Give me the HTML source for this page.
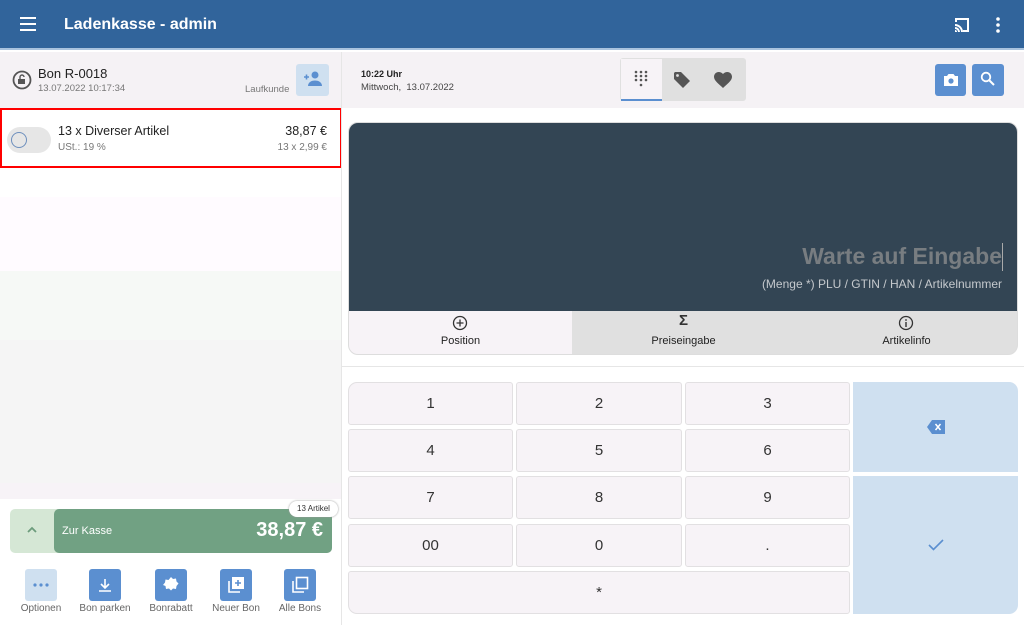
<!DOCTYPE html>
<html><head><meta charset="utf-8"><style>
*{box-sizing:border-box;margin:0;padding:0}
body{width:1024px;height:625px;overflow:hidden;font-family:"Liberation Sans",sans-serif;background:#fff;position:relative;color:#222}
.a{position:absolute}
.hdr{left:0;top:0;width:1024px;height:50px;background:#31649b;border-bottom:2px solid #a9c3de}
.key{position:absolute;background:#f7f3f7;border:1px solid #e2e0e2;border-radius:3px;display:flex;align-items:center;justify-content:center;font-size:15px;color:#333}
.bb{position:absolute;top:569px;width:32px;height:32px;background:#5b8fd0;border-radius:3px;display:flex;align-items:center;justify-content:center}
.bl{position:absolute;top:603px;font-size:10px;color:#666;text-align:center;width:70px}
</style></head><body>
<div class="a hdr">
 <svg class="a" style="left:20px;top:17px" width="18" height="14"><rect y="0" width="16" height="2" fill="#fff"/><rect y="6" width="16" height="2" fill="#fff"/><rect y="12" width="16" height="2" fill="#fff"/></svg>
 <div class="a" style="left:64px;top:16px;color:#fff;font-size:16px;font-weight:bold">Ladenkasse - admin</div>
 <svg class="a" style="left:953px;top:17px" width="18" height="16" viewBox="0 0 18 16"><path d="M2 1h14v14h-6v-2h4V3H4v2H2z" fill="#fff"/><path d="M2 7a8 8 0 0 1 8 8h-2a6 6 0 0 0-6-6zM2 10a5 5 0 0 1 5 5H5a3 3 0 0 0-3-3zM2 13a2 2 0 0 1 2 2H2z" fill="#fff"/></svg>
 <svg class="a" style="left:996px;top:17px" width="4" height="16"><circle cx="2" cy="2" r="1.8" fill="#fff"/><circle cx="2" cy="8" r="1.8" fill="#fff"/><circle cx="2" cy="14" r="1.8" fill="#fff"/></svg>
</div>
<!-- left panel -->
<div class="a" style="left:0;top:52px;width:342px;height:56px;background:#f5f2f5"></div>
<svg class="a" style="left:12px;top:70px" width="20" height="20" viewBox="0 0 20 20"><circle cx="10" cy="10" r="8.5" fill="none" stroke="#555" stroke-width="1.8"/><rect x="6" y="9" width="7" height="5" fill="#555"/><path d="M8 9V7a2 2 0 0 1 4 0" fill="none" stroke="#555" stroke-width="1.4"/></svg>
<div class="a" style="left:38px;top:66px;font-size:13px;color:#222">Bon R-0018</div>
<div class="a" style="left:38px;top:83px;font-size:9.5px;color:#777">13.07.2022 10:17:34</div>
<div class="a" style="left:245px;top:84px;font-size:9.5px;color:#777">Laufkunde</div>
<div class="a" style="left:296px;top:64px;width:33px;height:32px;background:#cfe0f0;border-radius:3px"></div>
<svg class="a" style="left:303px;top:71px" width="20" height="16" viewBox="0 0 20 16"><circle cx="12" cy="4" r="3.5" fill="#5b8fd0"/><path d="M5 15c0-4 4-5.5 7-5.5s7 1.5 7 5.5z" fill="#5b8fd0"/><path d="M1 6h5M3.5 3.5v5" stroke="#5b8fd0" stroke-width="1.6"/></svg>
<div class="a" style="left:0;top:108px;width:342px;height:60px;background:#fff;border:2px solid #f00"></div>
<div class="a" style="left:7px;top:127px;width:44px;height:26px;background:#e6e6e6;border-radius:13px"></div>
<div class="a" style="left:11px;top:132px;width:16px;height:16px;border:1.5px solid #6d8fbd;border-radius:50%"></div>
<div class="a" style="left:58px;top:124px;font-size:12.5px;color:#222">13 x Diverser Artikel</div>
<div class="a" style="left:58px;top:142px;font-size:10px;color:#777">USt.: 19 %</div>
<div class="a" style="left:250px;top:124px;width:77px;text-align:right;font-size:12.5px;color:#222">38,87 €</div>
<div class="a" style="left:230px;top:142px;width:97px;text-align:right;font-size:10px;color:#777">13 x 2,99 €</div>
<div class="a" style="left:0;top:197px;width:342px;height:74px;background:#fffbff"></div>
<div class="a" style="left:0;top:271px;width:342px;height:69px;background:#f6f9f6"></div>
<div class="a" style="left:0;top:340px;width:342px;height:143px;background:#f5f5f5"></div>
<div class="a" style="left:0;top:483px;width:342px;height:16px;background:#f7f3f7"></div>
<div class="a" style="left:10px;top:509px;width:322px;height:44px;background:#d5e7d5;border-radius:5px"></div>
<div class="a" style="left:54px;top:509px;width:278px;height:44px;background:#71a183;border-radius:5px"></div>
<svg class="a" style="left:26px;top:526px" width="12" height="8"><path d="M2 6l4-4 4 4" fill="none" stroke="#6c9c7c" stroke-width="1.8"/></svg>
<div class="a" style="left:62px;top:525px;font-size:11px;color:#fff">Zur Kasse</div>
<div class="a" style="left:200px;top:519px;width:123px;text-align:right;font-size:20px;font-weight:bold;color:#fff">38,87 €</div>
<div class="a" style="left:289px;top:501px;width:49px;height:16px;background:#fff;border-radius:8px;box-shadow:0 0 2px #999;font-size:8px;line-height:16px;text-align:center;color:#333">13 Artikel</div>
<div class="bb" style="left:25px;background:#cfe0f0"><svg width="16" height="4"><circle cx="2" cy="2" r="1.6" fill="#5b8fd0"/><circle cx="8" cy="2" r="1.6" fill="#5b8fd0"/><circle cx="14" cy="2" r="1.6" fill="#5b8fd0"/></svg></div>
<div class="bb" style="left:89px"><svg width="14" height="16"><path d="M7 2v9M3 7l4 4 4-4M1 14h12" fill="none" stroke="#fff" stroke-width="1.6"/></svg></div>
<div class="bb" style="left:155px"><svg width="18" height="18" viewBox="0 0 18 18"><path d="M9 1l2 2 3-.5.5 3 2 2-2 2.5-.5 3-3-.5-2 2-2-2-3 .5-.5-3L1 9l2-2.5.5-3 3 .5z" fill="#fff"/></svg></div>
<div class="bb" style="left:220px"><svg width="18" height="18"><path d="M2 5v11h11" fill="none" stroke="#fff" stroke-width="1.6"/><rect x="5" y="1" width="12" height="12" fill="#fff"/><path d="M11 4v6M8 7h6" stroke="#5b8fd0" stroke-width="1.6"/></svg></div>
<div class="bb" style="left:284px"><svg width="18" height="18"><path d="M2 5v11h11" fill="none" stroke="#fff" stroke-width="1.6"/><rect x="5.5" y="1.5" width="11" height="11" fill="none" stroke="#fff" stroke-width="1.6"/></svg></div>
<div class="bl" style="left:6px">Optionen</div>
<div class="bl" style="left:70px">Bon parken</div>
<div class="bl" style="left:136px">Bonrabatt</div>
<div class="bl" style="left:201px">Neuer Bon</div>
<div class="bl" style="left:265px">Alle Bons</div>
<div class="a" style="left:341px;top:52px;width:1px;height:573px;background:#e6e6e6"></div>
<!-- right top -->
<div class="a" style="left:342px;top:52px;width:682px;height:56px;background:#f5f2f5"></div>
<div class="a" style="left:361px;top:69px;font-size:9px;font-weight:bold;color:#222">10:22 Uhr</div>
<div class="a" style="left:361px;top:82px;font-size:9.5px;color:#444">Mittwoch,&nbsp; 13.07.2022</div>
<div class="a" style="left:620px;top:58px;width:126px;height:43px;background:#e0e0e0;border-radius:3px"></div>
<div class="a" style="left:621px;top:59px;width:41px;height:42px;background:#f7f3f7;border-bottom:2px solid #5b8fd0"></div>
<svg class="a" style="left:634px;top:70px" width="14" height="19"><g fill="#555"><circle cx="2" cy="2" r="1.3"/><circle cx="7" cy="2" r="1.3"/><circle cx="12" cy="2" r="1.3"/><circle cx="2" cy="6" r="1.3"/><circle cx="7" cy="6" r="1.3"/><circle cx="12" cy="6" r="1.3"/><circle cx="2" cy="10" r="1.3"/><circle cx="7" cy="10" r="1.3"/><circle cx="12" cy="10" r="1.3"/><circle cx="7" cy="15" r="1.3"/></g></svg>
<svg class="a" style="left:673px;top:71px" width="18" height="18" viewBox="0 0 18 18"><path d="M1 2v6l9 9 7-7-9-9H2z" fill="#555"/><circle cx="4.5" cy="4.5" r="1.4" fill="#e0e0e0"/></svg>
<svg class="a" style="left:714px;top:72px" width="18" height="16" viewBox="0 0 18 16"><path d="M9 16l-1.3-1.2C3 10.6 0 8 0 4.8 0 2.2 2 0 4.7 0 6.2 0 7.9.8 9 2c1.1-1.2 2.8-2 4.3-2C16 0 18 2.2 18 4.8c0 3.2-3 5.8-7.7 10z" fill="#555"/></svg>
<div class="a" style="left:935px;top:64px;width:31px;height:32px;background:#5b8fd0;border-radius:3px"></div>
<svg class="a" style="left:943px;top:72px" width="16" height="16"><path d="M1 4h3l1.5-2h5L12 4h3v10H1z" fill="#fff"/><circle cx="8" cy="9" r="2.6" fill="#5b8fd0"/></svg>
<div class="a" style="left:972px;top:64px;width:32px;height:32px;background:#5b8fd0;border-radius:3px"></div>
<svg class="a" style="left:980px;top:71px" width="16" height="16"><circle cx="6" cy="6" r="4.3" fill="none" stroke="#fff" stroke-width="1.8"/><path d="M9 9l5 5" stroke="#fff" stroke-width="2"/></svg>
<!-- display -->
<div class="a" style="left:348px;top:122px;width:670px;height:233px;border-radius:10px;background:#e0e0e0;overflow:hidden;border:1px solid #ddd">
 <div class="a" style="left:0;top:0;width:670px;height:188px;background:#334554"></div>
 <div class="a" style="left:0;top:188px;width:223px;height:45px;background:#f7f3f7"></div>
 <div class="a" style="left:200px;top:120px;width:453px;text-align:right;font-size:23px;font-weight:bold;color:#787d81">Warte auf Eingabe</div>
 <div class="a" style="left:653px;top:120px;width:1px;height:28px;background:#aaa"></div>
 <div class="a" style="left:200px;top:154px;width:453px;text-align:right;font-size:12px;color:#c5c9cd">(Menge *) PLU / GTIN / HAN / Artikelnummer</div>
 <svg class="a" style="left:103px;top:192px" width="16" height="16"><circle cx="8" cy="8" r="6.5" fill="none" stroke="#333" stroke-width="1.3"/><path d="M8 4.5v7M4.5 8h7" stroke="#333" stroke-width="1.3"/></svg>
 <div class="a" style="left:0;top:212px;width:223px;text-align:center;font-size:11px;color:#222">Position</div>
 <div class="a" style="left:223px;top:189px;width:223px;text-align:center;font-size:15px;font-weight:bold;color:#333">Σ</div>
 <div class="a" style="left:223px;top:212px;width:223px;text-align:center;font-size:11px;color:#222">Preiseingabe</div>
 <svg class="a" style="left:549px;top:192px" width="16" height="16"><circle cx="8" cy="8" r="6.5" fill="none" stroke="#333" stroke-width="1.3"/><path d="M8 7v5" stroke="#333" stroke-width="1.4"/><circle cx="8" cy="5" r=".9" fill="#333"/></svg>
 <div class="a" style="left:446px;top:212px;width:223px;text-align:center;font-size:11px;color:#222">Artikelinfo</div>
</div>
<div class="a" style="left:342px;top:366px;width:682px;height:1px;background:#e6e6e6"></div>
<!-- keypad -->
<div class="key" style="left:348px;top:382px;width:165px;height:43px;border-top-left-radius:9px">1</div>
<div class="key" style="left:516px;top:382px;width:166px;height:43px">2</div>
<div class="key" style="left:685px;top:382px;width:165px;height:43px">3</div>
<div class="key" style="left:348px;top:429px;width:165px;height:43px">4</div>
<div class="key" style="left:516px;top:429px;width:166px;height:43px">5</div>
<div class="key" style="left:685px;top:429px;width:165px;height:43px">6</div>
<div class="key" style="left:348px;top:476px;width:165px;height:43px">7</div>
<div class="key" style="left:516px;top:476px;width:166px;height:43px">8</div>
<div class="key" style="left:685px;top:476px;width:165px;height:43px">9</div>
<div class="key" style="left:348px;top:524px;width:165px;height:43px">00</div>
<div class="key" style="left:516px;top:524px;width:166px;height:43px">0</div>
<div class="key" style="left:685px;top:524px;width:165px;height:43px">.</div>
<div class="key" style="left:348px;top:571px;width:502px;height:43px;border-bottom-left-radius:9px">*</div>
<div class="a" style="left:853px;top:382px;width:165px;height:90px;background:#cfe0f0;border-top-right-radius:9px;display:flex;align-items:center;justify-content:center"><svg width="18" height="14" viewBox="0 0 18 14"><path d="M5 0h13v14H5L0 7z" fill="#5b8fd0"/><path d="M8.5 4l5 6M13.5 4l-5 6" stroke="#fff" stroke-width="1.5"/></svg></div>
<div class="a" style="left:853px;top:476px;width:165px;height:138px;background:#cfe0f0;border-bottom-right-radius:9px;display:flex;align-items:center;justify-content:center"><svg width="16" height="12"><path d="M1 6l4.5 4.5L15 1" fill="none" stroke="#5b8fd0" stroke-width="1.6"/></svg></div>
</body></html>
